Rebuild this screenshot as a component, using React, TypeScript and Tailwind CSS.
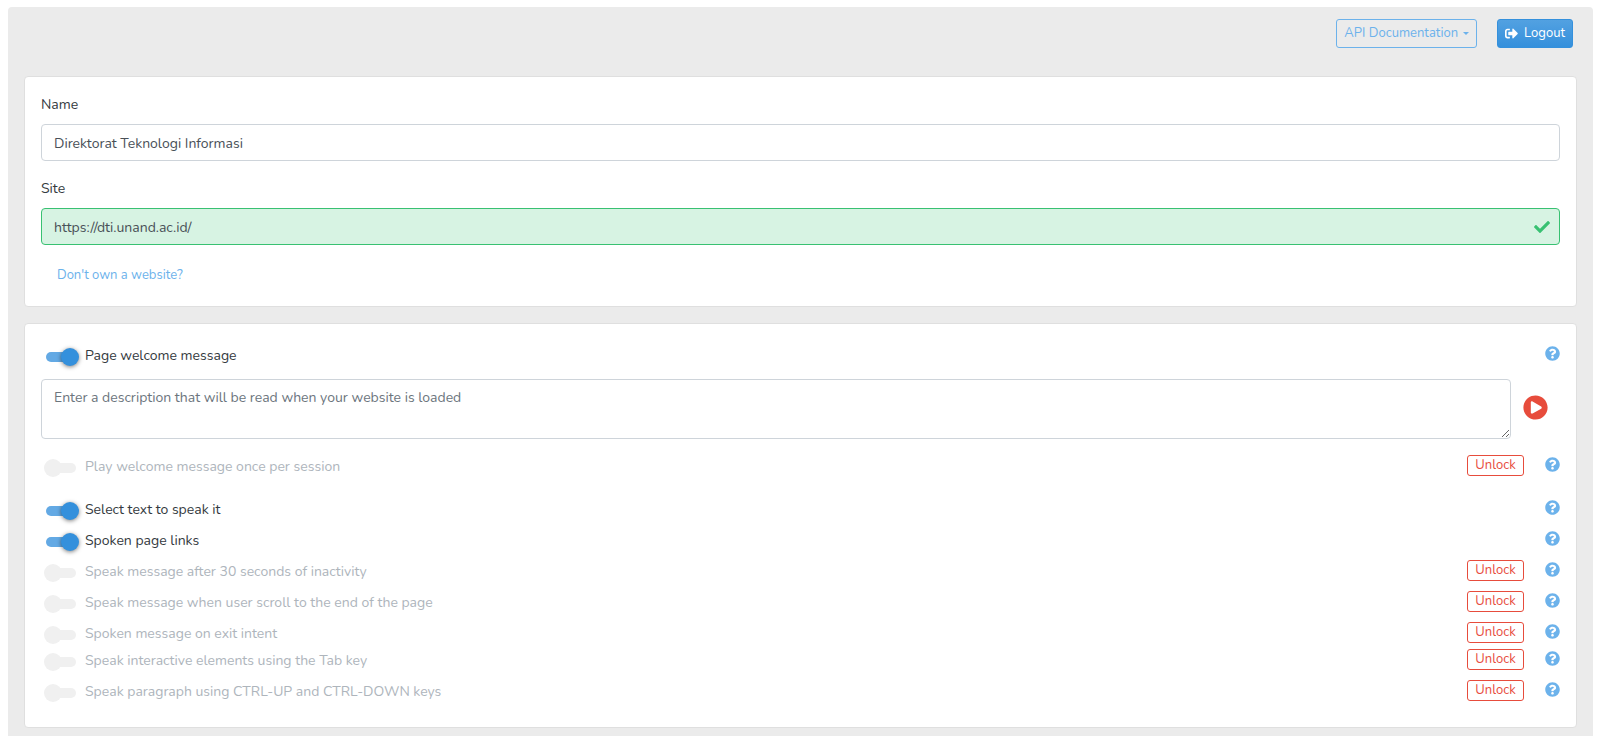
import { useState } from 'react';
import { FaCheck, FaPlayCircle, FaQuestionCircle, FaSignOutAlt } from 'react-icons/fa';

interface Feature {
  id: string;
  label: string;
  enabled: boolean;
  locked: boolean;
  spacing: string;
}

const FEATURES: Feature[] = [
  { id: 'once', label: 'Play welcome message once per session', enabled: false, locked: true, spacing: 'mt-3.5' },
  { id: 'select', label: 'Select text to speak it', enabled: true, locked: false, spacing: 'mt-5' },
  { id: 'links', label: 'Spoken page links', enabled: true, locked: false, spacing: 'mt-2' },
  { id: 'inactivity', label: 'Speak message after 30 seconds of inactivity', enabled: false, locked: true, spacing: 'mt-2' },
  { id: 'scroll', label: 'Speak message when user scroll to the end of the page', enabled: false, locked: true, spacing: 'mt-2' },
  { id: 'exit', label: 'Spoken message on exit intent', enabled: false, locked: true, spacing: 'mt-2' },
  { id: 'tab', label: 'Speak interactive elements using the Tab key', enabled: false, locked: true, spacing: 'mt-1' },
  { id: 'paragraph', label: 'Speak paragraph using CTRL-UP and CTRL-DOWN keys', enabled: false, locked: true, spacing: 'mt-2' },
];

export default function App() {
  const [name, setName] = useState('Direktorat Teknologi Informasi');
  const [site, setSite] = useState('https://dti.unand.ac.id/');
  const [message, setMessage] = useState('');

  return (
    <div className="min-h-screen bg-white px-2 pt-[7px] font-['Nunito','Open_Sans',sans-serif] text-sm text-[#495057]">
      <div className="rounded-t bg-[#ebebeb] px-4 pb-2">
        <header className="flex items-start justify-end gap-5 pt-3 pr-1 pb-7">
          <button
            type="button"
            className="flex h-[29px] items-center gap-[5px] rounded-[3px] border border-[#6cb2eb] px-[7px] text-[13px] text-[#6cb2eb]"
          >
            API Documentation
            <svg viewBox="0 0 6 3" className="h-[3px] w-[6px] fill-current">
              <path d="M0 0h6L3 3z" />
            </svg>
          </button>
          <button
            type="button"
            className="flex h-[29px] items-center gap-1.5 rounded-[3px] border border-[#3490dc] bg-linear-to-b from-[#52a1e1] to-[#3490dc] px-[7px] text-[13px] text-white"
          >
            <FaSignOutAlt className="size-[13px]" />
            Logout
          </button>
        </header>

        <section className="rounded border border-[#dfdfdf] bg-white p-4">
          <label htmlFor="name" className="mb-2 block leading-[23px] text-[#343a40]">
            Name
          </label>
          <input
            id="name"
            type="text"
            value={name}
            onChange={(e) => setName(e.target.value)}
            className="block h-[37px] w-full rounded border border-[#ced4da] px-3 pt-0.5 focus:outline-none"
          />
          <label htmlFor="site" className="mt-4 mb-2 block leading-[23px] text-[#343a40]">
            Site
          </label>
          <div className="relative">
            <input
              id="site"
              type="text"
              value={site}
              onChange={(e) => setSite(e.target.value)}
              className="block h-[37px] w-full rounded border border-[#38c172] bg-[#d7f3e3] pt-0.5 pr-10 pl-3 focus:outline-none"
            />
            <FaCheck className="absolute top-[11px] right-[10px] size-4 text-[#38c172]" />
          </div>
          <a href="#" className="mt-4 ml-2 inline-flex h-[29px] items-center px-2 align-top text-[13px] text-[#6cb2eb]">
            Don't own a website?
          </a>
        </section>

        <section className="mt-4 rounded border border-[#dfdfdf] bg-white px-4 pt-0.5 pb-[26px]">
          <div className="pt-4">
            <FeatureRow id="welcome" label="Page welcome message" enabled locked={false} spacing="" />
          </div>
          <div className="mt-3.5 flex items-start gap-3 pr-3">
            <textarea
              aria-label="Page welcome message"
              value={message}
              onChange={(e) => setMessage(e.target.value)}
              placeholder="Enter a description that will be read when your website is loaded"
              className="block h-[60px] flex-1 rounded border border-[#ced4da] px-3 py-1.5 leading-[23px] placeholder:text-[#6c757d] focus:outline-none"
            />
            <button type="button" aria-label="Play" className="mt-4 text-[#e74c3c]">
              <FaPlayCircle className="size-[25px]" />
            </button>
          </div>
          {FEATURES.map((feature) => (
            <FeatureRow key={feature.id} {...feature} />
          ))}
        </section>
      </div>
    </div>
  );
}

function FeatureRow({ id, label, enabled, locked, spacing }: Feature) {
  const [checked, setChecked] = useState(enabled);

  return (
    <div className={`flex h-[23px] items-center ${spacing}`}>
      <div className="flex flex-1 items-center gap-[9px] pt-1 pl-[5px]">
        <span className="flex pt-0.5">
          <input
            id={id}
            type="checkbox"
            role="switch"
            checked={checked}
            disabled={locked}
            onChange={(e) => setChecked(e.target.checked)}
            className="relative h-[10px] w-[30px] appearance-none rounded-full bg-[#bdbdbd] before:absolute before:-top-1 before:-left-0.5 before:size-[18px] before:rounded-full before:bg-white before:shadow before:content-[''] checked:bg-[#63a9e4] checked:before:left-[15px] checked:before:bg-[#3490dc] checked:before:shadow-[0_1px_4px_rgba(0,0,0,0.5)] disabled:bg-[#f0f0f0] disabled:before:bg-[#f0f0f0] disabled:before:shadow-none"
          />
        </span>
        <label htmlFor={id} className={locked ? 'text-[#aeb5bc]' : 'text-[#343a40]'}>
          {label}
        </label>
      </div>
      {locked && (
        <button
          type="button"
          className="mr-[21px] flex h-[21px] w-[57px] items-center justify-center self-end rounded-[3px] border border-[#e74c3c] text-[13px] text-[#e74c3c]"
        >
          Unlock
        </button>
      )}
      <button type="button" aria-label={`Help: ${label}`} className="text-[#6cb2eb]">
        <FaQuestionCircle className="size-[15px]" />
      </button>
    </div>
  );
}
